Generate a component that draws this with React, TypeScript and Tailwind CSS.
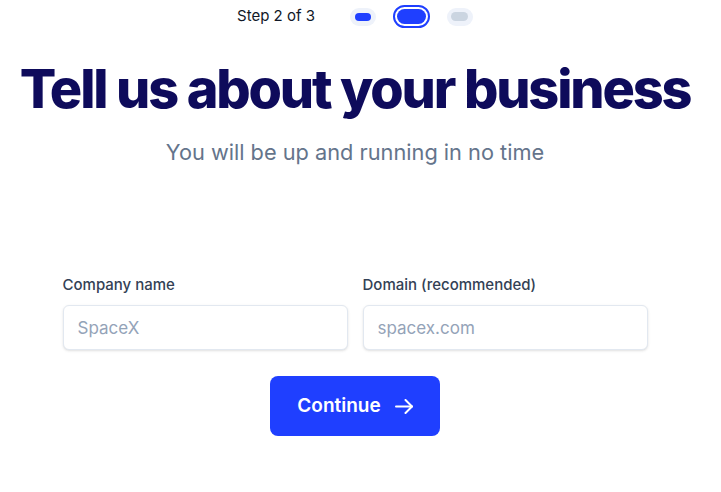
import * as React from "react";

const Field = ({ label, placeholder }: { label: string; placeholder: string }) => (
  <div className="flex flex-col w-[285px]">
    <label className="text-[15px] font-medium text-[#334155] leading-5">{label}</label>
    <input
      placeholder={placeholder}
      className="mt-[10px] h-[45px] w-full rounded-md border border-[#e2e8f0] bg-white px-[14px] text-[17px] text-[#0f172a] shadow-sm outline-none placeholder:text-[#94a3b8]"
    />
  </div>
);

const App = () => {
  return (
    <div
      className="w-[710px] min-h-[492px] bg-white flex flex-col items-center"
      style={{ fontFamily: "Inter, 'Noto Sans', sans-serif" }}
    >
      {/* STEPS */}
      <div className="mt-[5px] h-[23px] flex items-center">
        <span className="text-[15px] text-[#111827] mr-[35px]">Step 2 of 3</span>
        <div className="w-[26px] h-[18px] rounded-full bg-[#eef2fa] flex items-center justify-center">
          <div className="w-[16px] h-[8px] rounded-full bg-[#1f3fff]" />
        </div>
        <div className="ml-[17px] w-[37px] h-[23px] rounded-full border-2 border-[#1f3fff] p-[2px]">
          <div className="w-full h-full rounded-full bg-[#1f3fff]" />
        </div>
        <div className="ml-[17px] w-[26px] h-[18px] rounded-full bg-[#eef2fa] flex items-center justify-center">
          <div className="w-[17px] h-[9px] rounded-full bg-[#cbd5e1]" />
        </div>
      </div>

      {/* HEADING */}
      <h1 className="mt-[30px] text-[54px] leading-[62px] font-extrabold tracking-[-0.04em] text-[#0e0b5b]">
        Tell us about your business
      </h1>
      <p className="mt-[18px] text-[21.75px] leading-7 text-[#64748b]">You will be up and running in no time</p>

      {/* FORM */}
      <div className="mt-[109px] flex gap-[15px]">
        <Field label="Company name" placeholder="SpaceX" />
        <Field label="Domain (recommended)" placeholder="spacex.com" />
      </div>
      <button className="mt-[26px] w-[170px] h-[60px] rounded-lg bg-[#1f3fff] text-white text-[19px] font-semibold flex items-center justify-center gap-[14px]">
        Continue
        <svg width="18" height="15" viewBox="0 0 18 15" fill="none" stroke="currentColor" strokeWidth="2" strokeLinecap="round" strokeLinejoin="round">
          <path d="M1 7.5h16" />
          <path d="M10.5 1l6.5 6.5-6.5 6.5" />
        </svg>
      </button>
    </div>
  );
};

export default App;
